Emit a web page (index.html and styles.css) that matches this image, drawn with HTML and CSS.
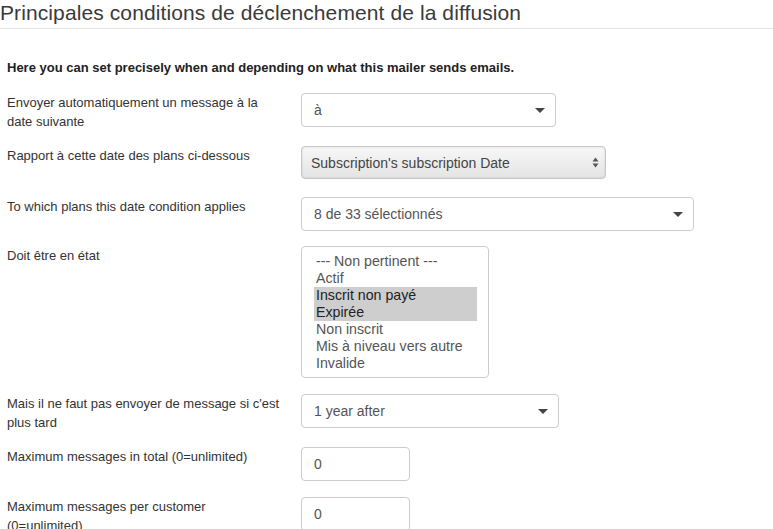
FILE: index.html
```html
<!DOCTYPE html>
<html lang="fr">
<head>
<meta charset="utf-8">
<link rel="stylesheet" href="styles.css">
</head>
<body>
<h2 class="title">Principales conditions de déclenchement de la diffusion</h2>
<p class="intro">Here you can set precisely when and depending on what this mailer sends emails.</p>
<div class="form">
  <div class="row">
    <div class="label">Envoyer automatiquement un message à la date suivante</div>
    <div class="control">
      <div class="select w254"><span>à</span><span class="caret"></span></div>
    </div>
  </div>
  <div class="row row-native">
    <div class="label">Rapport à cette date des plans ci-dessous</div>
    <div class="control">
      <div class="native-select"><span>Subscription's subscription Date</span>
        <svg class="updown" width="7" height="11" viewBox="0 0 7 11"><path d="M3.5 0.5 L6.5 4.5 L0.5 4.5 Z M3.5 10.5 L6.5 6.5 L0.5 6.5 Z" fill="#555"/></svg>
      </div>
    </div>
  </div>
  <div class="row">
    <div class="label">To which plans this date condition applies</div>
    <div class="control">
      <div class="select w392"><span>8 de 33 sélectionnés</span><span class="caret"></span></div>
    </div>
  </div>
  <div class="row row-list">
    <div class="label">Doit être en état</div>
    <div class="control">
      <div class="listbox">
        <div class="opt">--- Non pertinent ---</div>
        <div class="opt">Actif</div>
        <div class="opt sel">Inscrit non payé</div>
        <div class="opt sel">Expirée</div>
        <div class="opt">Non inscrit</div>
        <div class="opt">Mis à niveau vers autre</div>
        <div class="opt">Invalide</div>
      </div>
    </div>
  </div>
  <div class="row row-late">
    <div class="label">Mais il ne faut pas envoyer de message si c'est plus tard</div>
    <div class="control">
      <div class="select w257"><span>1 year after</span><span class="caret"></span></div>
    </div>
  </div>
  <div class="row row-total">
    <div class="label">Maximum messages in total (0=unlimited)</div>
    <div class="control">
      <div class="input">0</div>
    </div>
  </div>
  <div class="row">
    <div class="label">Maximum messages per customer (0=unlimited)</div>
    <div class="control">
      <div class="input">0</div>
    </div>
  </div>
</div>
</body>
</html>
```

FILE: styles.css
```css
html, body {
  margin: 0;
  padding: 0;
  background: #fff;
}
body {
  font-family: "Liberation Sans", Arial, sans-serif;
  color: #333;
  font-size: 13px;
}
.title {
  margin: 0;
  padding: 2px 0 5px 0;
  font-size: 21px;
  font-weight: normal;
  line-height: 21px;
  letter-spacing: 0.1px;
  color: #3a3a3a;
  border-bottom: 1px solid #e3e3e3;
}
.intro {
  margin: 29px 0 0 7px;
  font-weight: bold;
  font-size: 13px;
  line-height: 19px;
  color: #222;
}
.form {
  margin-top: 16px;
}
.row {
  display: grid;
  grid-template-columns: 301px 1fr;
  margin-bottom: 15px;
  align-items: start;
}
.row-native {
  margin-bottom: 18px;
}
.row-list {
  margin-bottom: 16px;
}
.row-total {
  margin-bottom: 16px;
}
.label {
  padding-left: 7px;
  padding-right: 19px;
  line-height: 19px;
  font-size: 13px;
  color: #333;
}
.control {
  display: flex;
}
.select, .input {
  box-sizing: border-box;
  height: 34px;
  border: 1px solid #ccc;
  border-radius: 4px;
  background: #fff;
  display: flex;
  align-items: center;
  justify-content: space-between;
  padding: 0 10px 0 12px;
  font-size: 14px;
  color: #555;
}
.w254 { width: 255px; }
.w392 { width: 393px; }
.w257 { width: 258px; }
.input { width: 109px; }
.caret {
  width: 0;
  height: 0;
  border-left: 5px solid transparent;
  border-right: 5px solid transparent;
  border-top: 5px solid #444;
}
.native-select {
  box-sizing: border-box;
  width: 305px;
  height: 33px;
  border: 1px solid #c8c8c8;
  border-radius: 4px;
  background: linear-gradient(#f7f7f7, #e4e4e4);
  box-shadow: inset 0 0 2px rgba(0,0,0,0.15);
  display: flex;
  align-items: center;
  justify-content: space-between;
  padding: 0 6px 0 9px;
  font-size: 14px;
  color: #444;
}
.listbox {
  box-sizing: border-box;
  width: 188px;
  height: 132px;
  border: 1px solid #ccc;
  border-radius: 4px;
  padding: 6px 11px 0 12px;
  font-size: 14.2px;
  color: #555;
}
.opt {
  line-height: 17px;
  height: 17px;
  padding-left: 2px;
  white-space: nowrap;
}
.opt.sel {
  background: #cecece;
  color: #222;
}
```
